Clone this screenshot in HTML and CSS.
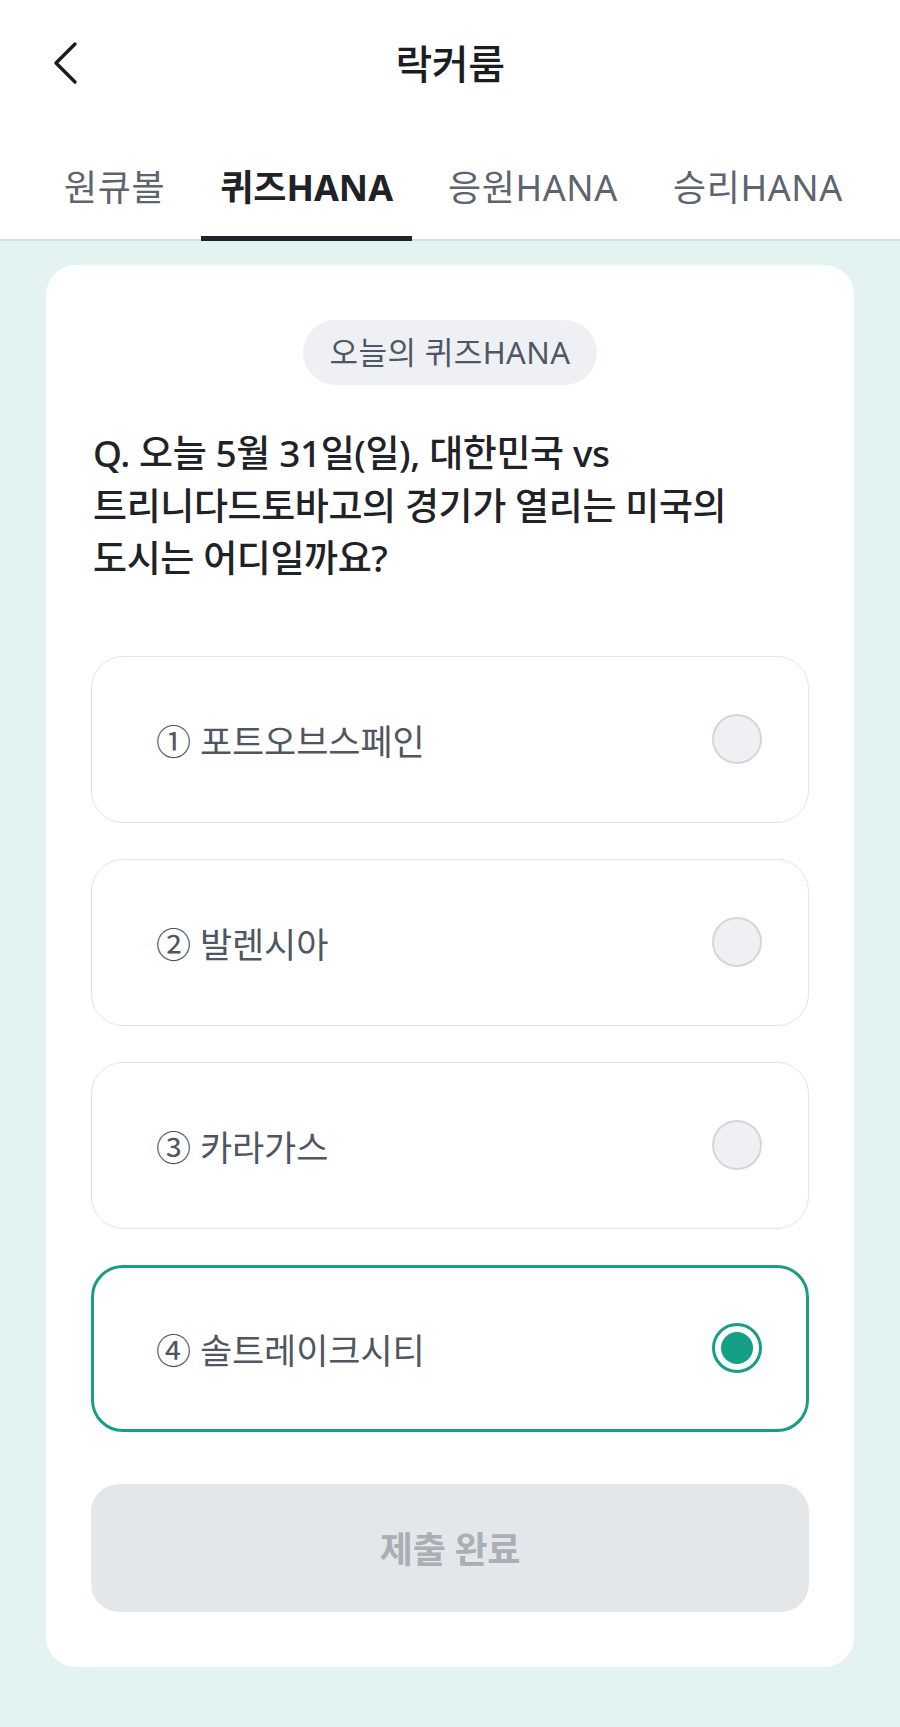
FILE: index.html
```html
<!DOCTYPE html>
<html lang="ko">
<head>
<meta charset="utf-8">
<title>락커룸</title>
<link rel="stylesheet" href="styles.css">
</head>
<body>
<div class="page">
  <header class="appbar">
    <button class="back" aria-label="뒤로">
      <svg width="26" height="44" viewBox="0 0 26 44"><path d="M23 3 L4 22 L23 41" fill="none" stroke="#1a1a1a" stroke-width="3.4" stroke-linecap="round" stroke-linejoin="round"/></svg>
    </button>
    <h1 class="title">락커룸</h1>
  </header>
  <nav class="tabs">
    <span class="tab">원큐볼</span>
    <span class="tab active">퀴즈HANA</span>
    <span class="tab">응원HANA</span>
    <span class="tab">승리HANA</span>
  </nav>
  <main class="main">
    <section class="card">
      <div class="pill-row"><span class="pill">오늘의 퀴즈HANA</span></div>
      <p class="question">Q. 오늘 5월 31일(일), 대한민국 vs<br>트리니다드토바고의 경기가 열리는 미국의<br>도시는 어디일까요?</p>
      <div class="options">
        <div class="option"><span class="label">① 포트오브스페인</span><span class="radio"></span></div>
        <div class="option"><span class="label">② 발렌시아</span><span class="radio"></span></div>
        <div class="option"><span class="label">③ 카라가스</span><span class="radio"></span></div>
        <div class="option selected"><span class="label">④ 솔트레이크시티</span><span class="radio"><span class="dot"></span></span></div>
      </div>
      <button class="submit">제출 완료</button>
    </section>
  </main>
</div>
</body>
</html>
```
FILE: styles.css
```css
* { box-sizing: border-box; }
html, body { margin: 0; padding: 0; }
body {
  font-family: "Noto Sans", "Noto Sans CJK KR", sans-serif;
  background: #e3f3f1;
  color: #1f2226;
}
.page { width: 900px; min-height: 1727px; display: flex; flex-direction: column; }
.appbar {
  height: 128px;
  background: #fff;
  display: flex;
  align-items: center;
  justify-content: center;
  position: relative;
}
.back {
  position: absolute;
  left: 52px;
  top: 41px;
  border: 0;
  background: none;
  padding: 0;
  width: 26px;
  height: 44px;
}
.back svg { display: block; }
.title {
  margin: 0;
  font-size: 40px;
  font-weight: 500;
  color: #1c1d1f;
  line-height: 1;
  letter-spacing: -0.5px;
}
.tabs {
  background: #fff;
  height: 113px;
  border-bottom: 2px solid #dadde0;
  display: flex;
  gap: 17px;
  padding-left: 45px;
}
.tab {
  height: 113px;
  padding: 36px 19px 0;
  font-size: 36px;
  line-height: 48px;
  color: #5d646e;
  letter-spacing: 0.6px;
  white-space: nowrap;
}
.tab.active {
  color: #1f2226;
  font-weight: 700;
  letter-spacing: 0;
  border-bottom: 5px solid #1f2226;
}
.main {
  flex: 1;
  padding: 24px 46px 60px;
}
.card {
  background: #fff;
  border-radius: 30px;
  padding: 55px 45px 55px;
}
.pill-row { display: flex; justify-content: center; }
.pill {
  height: 65px;
  padding: 0 27px;
  border-radius: 33px;
  background: #eef0f3;
  color: #4e5766;
  font-size: 31px;
  line-height: 65px;
  letter-spacing: 0.4px;
}
.question {
  margin: 42px 0 0;
  padding-left: 2px;
  font-size: 37px;
  line-height: 52.5px;
  font-weight: 500;
  color: #1f2226;
  letter-spacing: -0.4px;
}
.options {
  margin-top: 71px;
  display: flex;
  flex-direction: column;
  gap: 36px;
}
.option {
  height: 167px;
  border: 1.5px solid #e2e4e7;
  border-radius: 32px;
  display: flex;
  align-items: center;
  justify-content: space-between;
  padding: 0 46px 0 64px;
}
.option.selected {
  border: 3px solid #1a9c87;
  padding: 0 44px 0 62px;
}
.label {
  font-size: 35px;
  color: #4f5661;
  letter-spacing: -0.1px;
}
.radio {
  width: 50px;
  height: 50px;
  border-radius: 50%;
  border: 2px solid #d4d6da;
  background: #eff0f3;
  display: flex;
  align-items: center;
  justify-content: center;
}
.selected .radio {
  border: 3px solid #1a9c87;
  background: #fff;
}
.dot {
  width: 32px;
  height: 32px;
  border-radius: 50%;
  background: #14a086;
}
.submit {
  display: block;
  width: 100%;
  margin-top: 52px;
  height: 128px;
  border: 0;
  border-radius: 28px;
  background: #e4e7ea;
  color: #abafb5;
  font-family: inherit;
  font-size: 36px;
  font-weight: 700;
  letter-spacing: -0.3px;
}
```
